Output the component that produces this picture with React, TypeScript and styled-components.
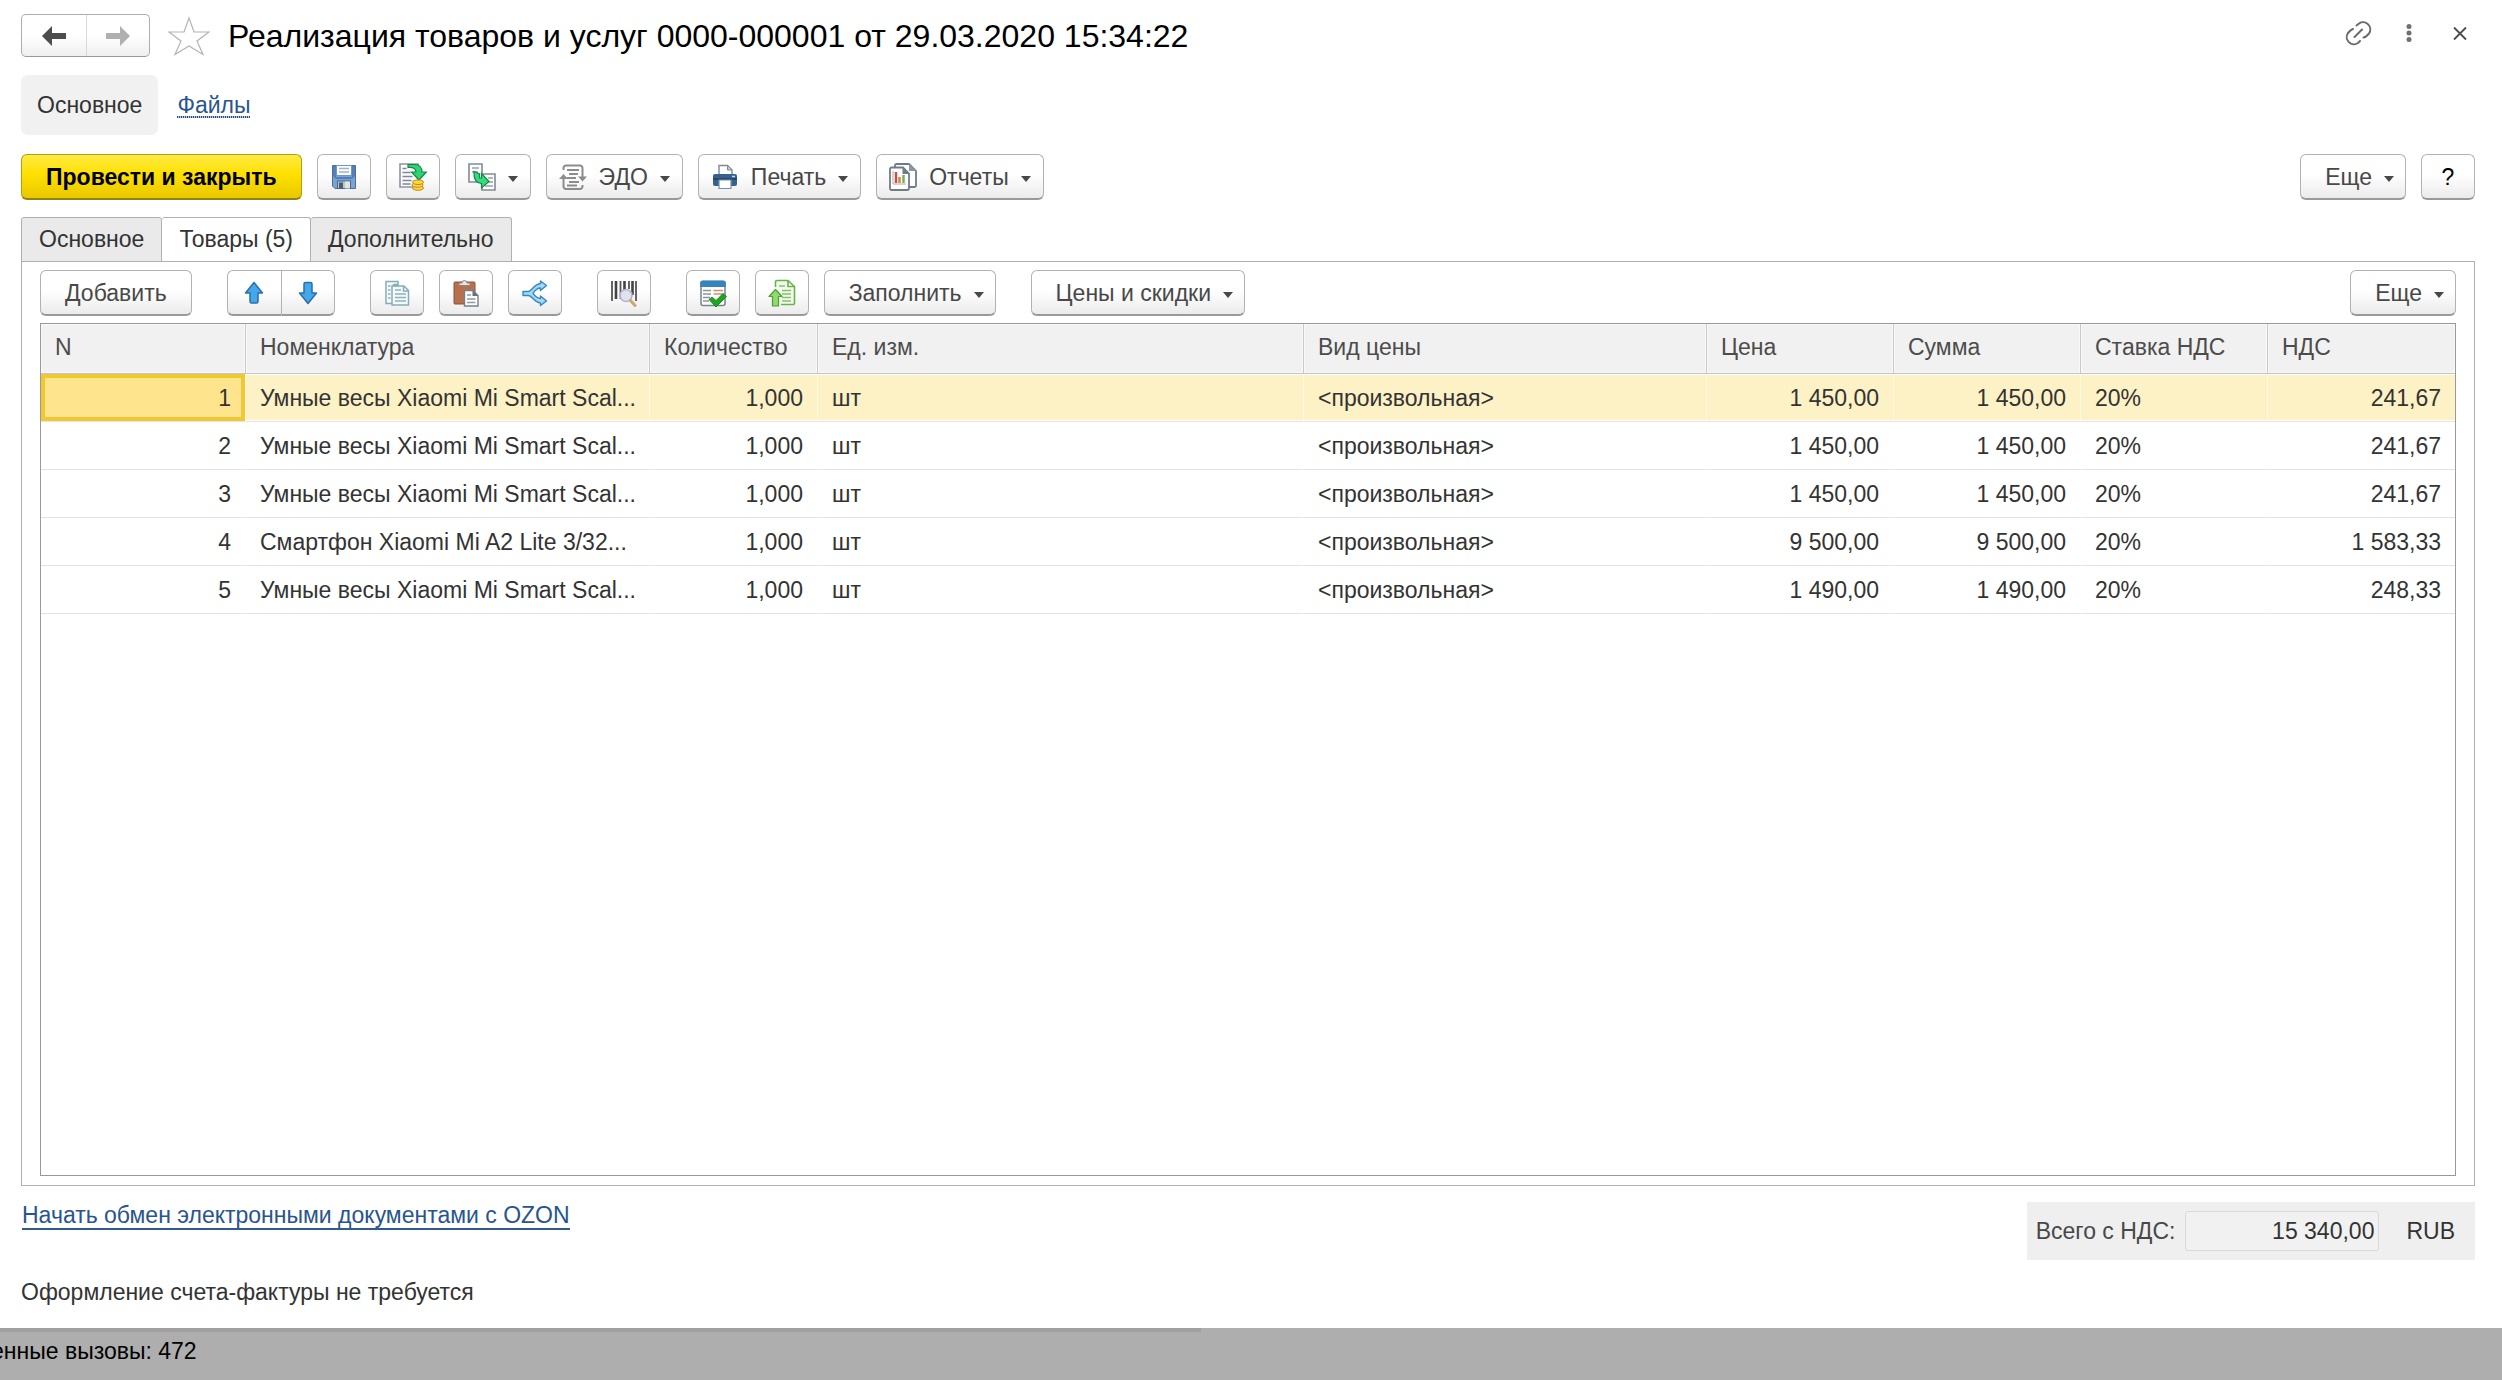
import React from "react";
import styled, { createGlobalStyle, css } from "styled-components";

const GlobalStyle = createGlobalStyle`
  * { box-sizing: border-box; }
  body {
    margin: 0;
    background: #fff;
    color: #333;
    font-family: "Liberation Sans", Arial, sans-serif;
    font-size: 23px;
    line-height: 26px;
  }
  button, input { font: inherit; }
`;

/* ---------- layout ---------- */

const Page = styled.div`
  display: flex;
  flex-direction: column;
  min-height: 100vh;
`;

const Form = styled.main`
  flex: 1;
  display: flex;
  flex-direction: column;
  padding: 14px 27px 0 21px;
`;

const Header = styled.header`
  display: flex;
  align-items: center;
  height: 43px;
`;

const Title = styled.h1`
  flex: 1;
  margin: 0 0 0 18px;
  font-size: 32px;
  line-height: 36px;
  font-weight: 400;
  color: #000;
`;

const WindowActions = styled.div`
  display: flex;
  gap: 21px;
  margin-bottom: 6px;
`;

const Sections = styled.nav`
  display: flex;
  align-items: center;
  gap: 19px;
  margin-top: 18px;
`;

const CurrentSection = styled.span`
  padding: 17px 16px;
  border-radius: 7px;
  background: #f1f1f1;
`;

const SectionLink = styled.a`
  color: #28558f;
  text-decoration: none;
  background: repeating-linear-gradient(90deg, #2c4f7d 0 1px, #b5c4d8 1px 2px) left bottom / 100% 2px no-repeat;
`;

const Toolbar = styled.div<{ $top?: number }>`
  display: flex;
  gap: 35px;
  margin-top: ${(p) => p.$top ?? 0}px;
`;

const Group = styled.div`
  display: flex;
  gap: 15px;
`;

const RightGroup = styled(Group)`
  margin-left: auto;
`;

const Tabs = styled.div`
  display: flex;
  margin-top: 17px;
  margin-bottom: -1px;
`;

const Panel = styled.section`
  flex: 1;
  display: flex;
  flex-direction: column;
  padding: 8px 18px 9px;
  border: 1px solid #b0b0b0;
`;

const GridBox = styled.div`
  flex: 1;
  margin-top: 7px;
  border: 1px solid #999;
`;

/* ---------- controls ---------- */

const face = css`
  border: 1px solid #b2b2b2;
  border-bottom: 2px solid #999;
  background: linear-gradient(#fff 0%, #fff 45%, #ebebeb 100%);
  color: #484848;
`;

const Button = styled.button<{ $primary?: boolean; $kind?: "icon" | "text" | "split" }>`
  ${face}
  display: inline-flex;
  align-items: center;
  justify-content: center;
  gap: 12px;
  height: 46px;
  padding: 0 12px;
  border-radius: 6px;
  white-space: nowrap;

  ${(p) => p.$kind === "text" && css`padding: 0 24px;`}
  ${(p) => p.$kind === "split" && css`padding: 0 11px 0 24px;`}
  ${(p) =>
    p.$primary &&
    css`
      border-color: #b59d10;
      border-bottom-color: #94820f;
      background: linear-gradient(#ffea45 0%, #ffe000 45%, #e8c800 100%);
      color: #000;
      font-weight: 700;
    `}
`;

const HelpButton = styled(Button)`
  width: 54px;
  color: #000;
`;

const Joined = styled.div`
  display: flex;

  button {
    width: 54px;
  }
  button:first-child {
    border-top-right-radius: 0;
    border-bottom-right-radius: 0;
    border-right: 0;
  }
  button:last-child {
    border-top-left-radius: 0;
    border-bottom-left-radius: 0;
  }
`;

const History = styled.div`
  display: flex;
  border: 1px solid #adadad;
  border-bottom-color: #999;
  border-radius: 5px;
  background: linear-gradient(#fff 0%, #fff 50%, #efefef 100%);
`;

const HistoryButton = styled.button`
  display: flex;
  align-items: center;
  justify-content: center;
  width: 64px;
  height: 41px;
  padding: 0;
  border: 0;
  background: none;

  & + & {
    width: 63px;
    border-left: 1px solid #dadada;
  }
`;

const PlainButton = styled.button`
  display: flex;
  align-items: center;
  justify-content: center;
  width: 30px;
  height: 30px;
  padding: 0;
  border: 0;
  background: none;
`;

const StarButton = styled(PlainButton)`
  width: 42px;
  height: 40px;
  margin-left: 18px;
`;

const Tab = styled.button<{ $active?: boolean }>`
  height: 45px;
  padding: 0 17px 1px;
  border: 1px solid #b0b0b0;
  border-radius: 3px 3px 0 0;
  background: ${(p) => (p.$active ? "#fff" : "#eaeaea")};
  border-bottom-color: ${(p) => (p.$active ? "#fff" : "#b0b0b0")};
  color: #333;

  & + & {
    border-left-width: ${(p) => (p.$active ? 0 : 1)}px;
  }
`;

/* ---------- table ---------- */

const Table = styled.table`
  width: 100%;
  table-layout: fixed;
  border-collapse: separate;
  border-spacing: 0;
`;

const HeadCell = styled.th`
  height: 50px;
  padding: 0 14px 3px;
  border-bottom: 1px solid #c4c4c4;
  border-right: 1px solid #c9c9c9;
  background: #f1f1f1;
  box-shadow: inset 0 0 0 1px #f9f9f9;
  color: #4c4c4c;
  font-weight: 400;
  text-align: left;

  &:last-child {
    border-right: 0;
  }
`;

const Row = styled.tr<{ $selected?: boolean }>`
  td {
    background: ${(p) => (p.$selected ? "#fdf1c6" : "#fff")};
    border-right-color: ${(p) => (p.$selected ? "#fff9e6" : "#fff")};
    box-shadow: inset 0 1px #fff, inset 0 -1px #fff;
  }
  td:first-child {
    ${(p) =>
      p.$selected &&
      css`
        background: #ffe48e;
        box-shadow: inset 0 0 0 4px #f0c832;
      `}
  }
`;

const Cell = styled.td<{ $right?: boolean }>`
  height: 48px;
  padding: 0 14px;
  border-bottom: 1px solid #e4e4e4;
  border-right: 1px solid #fff;
  overflow: hidden;
  white-space: nowrap;
  text-align: ${(p) => (p.$right ? "right" : "left")};

  &:last-child {
    border-right: 0;
  }
`;

/* ---------- footer ---------- */

const Footer = styled.footer`
  display: flex;
  justify-content: space-between;
  align-items: flex-start;
  height: 142px;
  padding-top: 16px;
`;

const Notes = styled.div`
  display: flex;
  flex-direction: column;
  align-items: flex-start;
  gap: 49px;
`;

const ExchangeLink = styled.a`
  margin-left: 1px;
  color: #28558f;
  text-decoration: none;
  border-bottom: 2px solid #2f5a8c;
`;

const Totals = styled.div`
  display: flex;
  align-items: center;
  gap: 10px;
  height: 58px;
  padding: 0 20px 0 9px;
  background: #efefef;
`;

const TotalLabel = styled.label`
  color: #484848;
`;

const TotalInput = styled.input`
  width: 194px;
  height: 40px;
  padding: 0 4px;
  border: 1px solid #d9d9d9;
  border-radius: 3px;
  background: #f1f1f1;
  color: #333;
  text-align: right;
`;

const Currency = styled.span`
  margin-left: 17px;
`;

const StatusBar = styled.div`
  height: 52px;
  overflow: hidden;
  background: #aeaeae;
  color: #000;
`;

const StatusProgress = styled.div`
  width: 48%;
  height: 4px;
  background: #9f9f9f;
`;

const StatusText = styled.div`
  margin: 6px 0 0 -9px;
`;

/* ---------- icons ---------- */

const Svg = ({ size = 28, children }: { size?: number; children: React.ReactNode }) => (
  <svg width={size} height={size} viewBox={`0 0 ${size} ${size}`} fill="none" aria-hidden="true">
    {children}
  </svg>
);

const CaretBox = styled.span`
  display: flex;
  padding-top: 5px;
`;

const Drop = () => (
  <CaretBox>
    <svg width="10" height="6" viewBox="0 0 10 6" aria-hidden="true">
      <path d="M0 0h10L5 6z" fill="#484848" />
    </svg>
  </CaretBox>
);

const ArrowLeft = () => (
  <Svg>
    <path d="M2 14L12 4v7h14v6H12v7z" fill="#4d4d4d" />
  </Svg>
);

const ArrowRight = () => (
  <Svg>
    <path d="M26 14L16 4v7H2v6h14v7z" fill="#b0b0b0" />
  </Svg>
);

const Star = () => (
  <svg width="42" height="40" viewBox="0 0 42 40" fill="none" aria-hidden="true">
    <path d="M21 2l5 14h15L29 25l6 13.500L21 30 7 38.500 13 25 1 16h15z" stroke="#b4b4b4" strokeWidth="1.200" />
  </svg>
);

const LinkIcon = () => (
  <Svg size={30}>
    <g stroke="#6a6a6a" strokeWidth="2" strokeLinecap="round">
      <path d="M13.500 7.500l2.500-2a7.200 7.200 0 0 1 10 10l-2.500 2.500a5 5 0 0 1-3 1.500" />
      <path d="M10 11a6 6 0 0 0-2.500 1.500L5 15a7.200 7.200 0 0 0 10 10l2-2" />
      <path d="M11.500 19l7.500-7.500" />
    </g>
  </Svg>
);

const Dots = () => (
  <Svg size={30}>
    <g fill="#707070">
      <circle cx="15" cy="8.500" r="2.500" />
      <circle cx="15" cy="15" r="2.500" />
      <circle cx="15" cy="21.500" r="2.500" />
    </g>
  </Svg>
);

const Close = () => (
  <Svg size={30}>
    <path d="M9 9.500l12 12M21 9.500l-12 12" stroke="#4d4d4d" strokeWidth="1.800" />
  </Svg>
);

const Save = () => (
  <Svg>
    <path d="M2.500 2.500h23v23H5l-2.500-2.500z" fill="#7ba3d6" stroke="#4a6f9e" />
    <path d="M3 3h3v11h16V3h3v10l-3 3H6l-3-3z" fill="#5580b5" />
    <rect x="6.500" y="2.500" width="15" height="10" fill="#fdfeff" stroke="#7396c4" />
    <path d="M9 5.500h10M9 9h10" stroke="#9fb5cf" strokeWidth="1.500" />
    <rect x="7.500" y="18" width="13" height="7.500" fill="#b9c6cb" stroke="#49688c" />
    <rect x="9" y="19.500" width="4" height="6" fill="#4b5f74" />
    <path d="M15 18.500h5v7h-5z" fill="#e2e5dc" />
  </Svg>
);

const Post = () => (
  <Svg>
    <path d="M1 1h18v23H1z" fill="#fcfcfd" stroke="#8c95a3" strokeWidth="1.600" />
    <path d="M3.500 5.500h4M3.500 9.500h8M3.500 13.500h10M3.500 17.500h9M3.500 21h8" stroke="#7c8797" strokeWidth="1.600" />
    <path d="M9 1.500h6.500c5 0 7.500 3 7.500 7.500h4.500L20 17l-7.500-8H17c0-3.500-3-5-8-4.500z" fill="#2ed673" stroke="#16864b" strokeWidth="1.200" />
    <g fill="#ffd640" stroke="#c28b17">
      <ellipse cx="19" cy="25" rx="5.500" ry="2.300" />
      <ellipse cx="18.500" cy="22" rx="5.500" ry="2.300" />
      <ellipse cx="19" cy="19.200" rx="5.500" ry="2.300" />
    </g>
  </Svg>
);

const CreateBased = () => (
  <Svg>
    <path d="M1 1h13v18H1zM14 11h13v16H14z" fill="#fdfdfd" stroke="#818b93" strokeWidth="1.600" />
    <path d="M4 5h7M4 9h6M20 15h5M20 19h5M17 23h8" stroke="#98a1a8" strokeWidth="1.400" />
    <path d="M6 8.500l5.500 2.500v4h2V10.500l7.500 8-7.500 6.500v-4.500C8.500 20 5.500 16 6 8.500z" fill="#34dc7b" stroke="#17854b" strokeWidth="1.200" />
  </Svg>
);

const Edo = () => (
  <Svg>
    <g stroke="#8c8c8c" strokeWidth="2">
      <path d="M4.500 7V5a2.500 2.500 0 0 1 2.500-2.500h14A2.500 2.500 0 0 1 23.500 5v9M23.500 22v1.500A2.500 2.500 0 0 1 21 26H7a2.500 2.500 0 0 1-2.500-2.500V15" />
      <path d="M8 7h12M10 11h9M8 15h9M10 19h10M8 22.500h10" />
    </g>
    <path d="M0 16l4.500-5 4.500 5zM19 13.500h9l-4.500 5z" fill="#8c8c8c" />
  </Svg>
);

const Print = () => (
  <Svg>
    <path d="M8 12V2.500h8.500L21 7v5" fill="#fff" stroke="#7e8a94" strokeWidth="1.400" />
    <path d="M16.500 2.500V7H21z" fill="#c6cdd3" stroke="#7e8a94" />
    <rect x="2" y="11" width="24" height="12" rx="2" fill="#34618f" />
    <path d="M2 16h24" stroke="#244668" strokeWidth="2" />
    <path d="M21 13.500h3" stroke="#c8dcef" strokeWidth="1.500" />
    <path d="M8 17h12v8.500H8z" fill="#fff" stroke="#7690ab" strokeWidth="1.200" />
  </Svg>
);

const Reports = () => (
  <Svg>
    <path d="M6 5V2.500A1.500 1.500 0 0 1 7.500 1H20l7 7v14.500a1.500 1.500 0 0 1-1.500 1.500H20" fill="#fff" stroke="#6f7c88" strokeWidth="1.800" />
    <path d="M20 1v7h7z" fill="#8d98a2" />
    <path d="M2.500 4.500H14l6 6V25a2 2 0 0 1-2 2H2.500A1.500 1.500 0 0 1 1 25.500V6a1.500 1.500 0 0 1 1.500-1.500z" fill="#fff" stroke="#6f7c88" strokeWidth="1.800" />
    <path d="M13.500 4.500v6.500H20z" fill="#6f7c88" />
    <path d="M4 8v13h13" stroke="#b9a7a0" />
    <path d="M7 9v11" stroke="#c0504d" strokeWidth="2.500" />
    <path d="M10.500 14v6" stroke="#e0803a" strokeWidth="2.500" />
    <path d="M14.500 12v8" stroke="#6fb35c" strokeWidth="2.500" />
  </Svg>
);

const Up = () => (
  <Svg>
    <path d="M14 3.500l8.500 10.500h-4.500v8.500a1.500 1.500 0 0 1-1.500 1.500h-5a1.500 1.500 0 0 1-1.500-1.500V14H5.500z" fill="#43a9ec" stroke="#2b70a6" strokeWidth="1.500" strokeLinejoin="round" />
  </Svg>
);

const Down = () => (
  <Svg>
    <path d="M14 24.500L22.500 14h-4.500V5a1.500 1.500 0 0 0-1.500-1.500h-5A1.500 1.500 0 0 0 10 5v9H5.500z" fill="#43a9ec" stroke="#2b70a6" strokeWidth="1.500" strokeLinejoin="round" />
  </Svg>
);

const Copy = () => (
  <Svg>
    <path d="M3 2.500h12v3h-4l-2 2v17H3zM9 7h12l4.500 4.500V26H9z" fill="#f4fafc" stroke="#86acb9" strokeWidth="1.500" />
    <path d="M20.500 7v5h5" stroke="#86acb9" strokeWidth="1.500" />
    <path d="M5 7h2.500M5 11h2.500M5 15h2.500M5 19h2.500M12 11h6M12 15h11M12 18.500h11M12 22h11" stroke="#8eb1bd" strokeWidth="1.500" />
  </Svg>
);

const Paste = () => (
  <Svg>
    <rect x="2" y="3" width="21" height="22" rx="1" fill="#b5704d" stroke="#8f5233" />
    <path d="M7 6.500V4h3a2.500 2.500 0 0 1 5 0h3v2.500z" fill="#e8e4de" stroke="#8b8580" />
    <path d="M12.500 11.500H21l5 5V27H12.500z" fill="#fff" stroke="#76828b" strokeWidth="1.400" />
    <path d="M20.500 11.500v5.500H26z" fill="#64717b" />
    <path d="M15 16h4M15 20h8.500M15 23.500h8.500" stroke="#8e9aa3" strokeWidth="1.500" />
  </Svg>
);

const Share = () => (
  <Svg>
    <path
      d="M2 12.500h5.500C11 12 13 5 19.500 4.500V2l6 4.500-6 5V9C15.500 9 13.500 12 12 14.300c1.500 2.200 3.500 5.200 7.500 5.200V17l6 5-6 4.500V24C13 23.500 11 16.500 7.500 16.500H2z"
      fill="#a3daf7"
      stroke="#3a86bd"
      strokeWidth="1.400"
      strokeLinejoin="round"
    />
  </Svg>
);

const Barcode = () => (
  <Svg>
    <path d="M2 2v20M10.500 2v18M19 2v8M26 2v20" stroke="#555" strokeWidth="1.800" />
    <path d="M6 2v18M14.500 2v9M22.500 2v14" stroke="#444" strokeWidth="2.600" />
    <circle cx="16" cy="16.500" r="6" fill="#dcdff0" fillOpacity=".92" stroke="#b3b4c6" strokeWidth="1.600" />
    <path d="M20.500 21.500l4.500 5" stroke="#c9a676" strokeWidth="3" strokeLinecap="round" />
  </Svg>
);

const Check = () => (
  <Svg>
    <rect x="2" y="2.500" width="24" height="24" rx="2" fill="#fff" stroke="#75838f" strokeWidth="1.500" />
    <path d="M1.200 8V4a2.500 2.500 0 0 1 2.500-2.500h20.600a2.500 2.500 0 0 1 2.500 2.500v4z" fill="#3683c0" />
    <path d="M4 11.500h8M4 15h8M4 18.500h7M4 22h6" stroke="#8a949c" strokeWidth="1.500" />
    <path d="M14.500 11.500H24M14.500 15H24" stroke="#dd8a70" strokeWidth="1.500" />
    <path d="M10 20.500l3-2.500 4 3.500 7-7 3.500 3-10.500 10.500z" fill="#1da51d" stroke="#108010" strokeWidth=".8" />
  </Svg>
);

const Load = () => (
  <Svg>
    <path d="M7.500 8V3A1.500 1.500 0 0 1 9 1.500h11l6.500 6V24a1.500 1.500 0 0 1-1.500 1.500H13" fill="#f3fbef" stroke="#6ab24e" strokeWidth="1.600" />
    <path d="M20 1.500v6h6.500" stroke="#6ab24e" strokeWidth="1.600" />
    <path d="M11 7h6M14 11.500h9M14 15h9M14 18.500h9M14 22h9" stroke="#85c16c" strokeWidth="1.500" />
    <path d="M7.500 10.500l6.500 7h-3.500v9.500h-6v-9.500H1z" fill="#8fdb6b" stroke="#4f9e33" strokeWidth="1.200" strokeLinejoin="round" />
  </Svg>
);

/* ---------- data ---------- */

const columns = [
  { title: "N", width: 205, right: true },
  { title: "Номенклатура", width: 404 },
  { title: "Количество", width: 168, right: true },
  { title: "Ед. изм.", width: 486 },
  { title: "Вид цены", width: 403 },
  { title: "Цена", width: 187, right: true },
  { title: "Сумма", width: 187, right: true },
  { title: "Ставка НДС", width: 187 },
  { title: "НДС", right: true },
];

const scales = "Умные весы Xiaomi Mi Smart Scal...";
const phone = "Смартфон Xiaomi Mi A2 Lite 3/32...";

const items = [
  { name: scales, price: "1 450,00", vat: "241,67" },
  { name: scales, price: "1 450,00", vat: "241,67" },
  { name: scales, price: "1 450,00", vat: "241,67" },
  { name: phone, price: "9 500,00", vat: "1 583,33" },
  { name: scales, price: "1 490,00", vat: "248,33" },
];

export default function App() {
  return (
    <>
      <GlobalStyle />
      <Page>
        <Form>
          <Header>
            <History>
              <HistoryButton aria-label="Назад"><ArrowLeft /></HistoryButton>
              <HistoryButton aria-label="Вперед"><ArrowRight /></HistoryButton>
            </History>
            <StarButton aria-label="В избранное"><Star /></StarButton>
            <Title>Реализация товаров и услуг 0000-000001 от 29.03.2020 15:34:22</Title>
            <WindowActions>
              <PlainButton aria-label="Получить ссылку"><LinkIcon /></PlainButton>
              <PlainButton aria-label="Меню"><Dots /></PlainButton>
              <PlainButton aria-label="Закрыть"><Close /></PlainButton>
            </WindowActions>
          </Header>

          <Sections>
            <CurrentSection>Основное</CurrentSection>
            <SectionLink href="#files">Файлы</SectionLink>
          </Sections>

          <Toolbar $top={19}>
            <Group>
              <Button $primary $kind="text">Провести и закрыть</Button>
              <Button aria-label="Записать"><Save /></Button>
              <Button aria-label="Провести"><Post /></Button>
              <Button aria-label="Создать на основании"><CreateBased /><Drop /></Button>
              <Button><Edo />ЭДО<Drop /></Button>
              <Button><Print />Печать<Drop /></Button>
              <Button><Reports />Отчеты<Drop /></Button>
            </Group>
            <RightGroup>
              <Button $kind="split">Еще<Drop /></Button>
              <HelpButton>?</HelpButton>
            </RightGroup>
          </Toolbar>

          <Tabs role="tablist">
            <Tab role="tab" aria-selected={false}>Основное</Tab>
            <Tab role="tab" aria-selected $active>Товары (5)</Tab>
            <Tab role="tab" aria-selected={false}>Дополнительно</Tab>
          </Tabs>

          <Panel>
            <Toolbar>
              <Button $kind="text">Добавить</Button>
              <Joined>
                <Button aria-label="Переместить вверх"><Up /></Button>
                <Button aria-label="Переместить вниз"><Down /></Button>
              </Joined>
              <Group>
                <Button aria-label="Копировать"><Copy /></Button>
                <Button aria-label="Вставить"><Paste /></Button>
                <Button aria-label="Разбить строку"><Share /></Button>
              </Group>
              <Button aria-label="Поиск по штрихкоду"><Barcode /></Button>
              <Group>
                <Button aria-label="Подобрать"><Check /></Button>
                <Button aria-label="Загрузить"><Load /></Button>
                <Button $kind="split">Заполнить<Drop /></Button>
              </Group>
              <Button $kind="split">Цены и скидки<Drop /></Button>
              <RightGroup>
                <Button $kind="split">Еще<Drop /></Button>
              </RightGroup>
            </Toolbar>

            <GridBox>
              <Table>
                <colgroup>
                  {columns.map((c) => (
                    <col key={c.title} width={c.width} />
                  ))}
                </colgroup>
                <thead>
                  <tr>
                    {columns.map((c) => (
                      <HeadCell key={c.title} scope="col">{c.title}</HeadCell>
                    ))}
                  </tr>
                </thead>
                <tbody>
                  {items.map((item, i) => {
                    const values = [i + 1, item.name, "1,000", "шт", "<произвольная>", item.price, item.price, "20%", item.vat];
                    return (
                      <Row key={i} $selected={i === 0}>
                        {values.map((value, k) => (
                          <Cell key={k} $right={columns[k].right}>{value}</Cell>
                        ))}
                      </Row>
                    );
                  })}
                </tbody>
              </Table>
            </GridBox>
          </Panel>

          <Footer>
            <Notes>
              <ExchangeLink href="#ozon">Начать обмен электронными документами с OZON</ExchangeLink>
              <span>Оформление счета-фактуры не требуется</span>
            </Notes>
            <Totals>
              <TotalLabel htmlFor="total">Всего с НДС:</TotalLabel>
              <TotalInput id="total" readOnly value="15 340,00" />
              <Currency>RUB</Currency>
            </Totals>
          </Footer>
        </Form>

        <StatusBar>
          <StatusProgress />
          <StatusText>енные вызовы: 472</StatusText>
        </StatusBar>
      </Page>
    </>
  );
}
